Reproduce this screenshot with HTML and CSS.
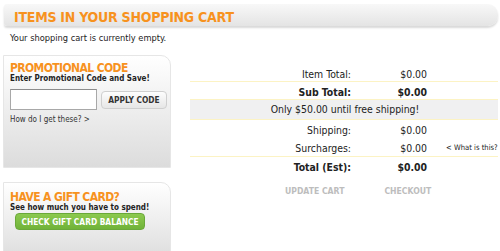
FILE: index.html
```html
<!DOCTYPE html>
<html lang="en">

<head>
    <meta charset="UTF-8">
    <meta name="viewport" content="width=device-width, initial-scale=1.0">
    <title>Shopping Cart</title>
    <link rel="stylesheet" href="styles.css">
</head>

<body>
    <div class="cart-header">
        <h1>ITEMS IN YOUR SHOPPING CART</h1>
    </div>
    <p class="empty-msg">Your shopping cart is currently empty.</p>

    <div class="cart-main">
        <div class="side-col">
            <div class="side-box promo-box">
                <h2>PROMOTIONAL CODE</h2>
                <p class="side-sub">Enter Promotional Code and Save!</p>
                <div class="promo-form">
                    <input type="text" class="promo-input">
                    <button class="apply-btn">APPLY CODE</button>
                </div>
                <a href="#" class="help-link">How do I get these? &gt;</a>
            </div>

            <div class="side-box gift-box">
                <h2>HAVE A GIFT CARD?</h2>
                <p class="side-sub">See how much you have to spend!</p>
                <button class="gift-btn">CHECK GIFT CARD BALANCE</button>
            </div>
        </div>

        <div class="totals">
            <div class="tot-row row-item">
                <span class="tot-label">Item Total:</span>
                <span class="tot-value">$0.00</span>
            </div>
            <div class="tot-row row-sub bold">
                <span class="tot-label">Sub Total:</span>
                <span class="tot-value">$0.00</span>
            </div>
            <div class="free-ship">Only $50.00 until free shipping!</div>
            <div class="tot-row row-ship">
                <span class="tot-label">Shipping:</span>
                <span class="tot-value">$0.00</span>
            </div>
            <div class="tot-row row-sur">
                <span class="tot-label">Surcharges:</span>
                <span class="tot-value">$0.00</span>
                <a href="#" class="what-link">&lt; What is this?</a>
            </div>
            <div class="tot-row row-total bold">
                <span class="tot-label">Total (Est):</span>
                <span class="tot-value">$0.00</span>
            </div>
            <div class="cart-actions">
                <button class="action-btn">UPDATE CART</button>
                <button class="action-btn">CHECKOUT</button>
            </div>
        </div>
    </div>
</body>

</html>
```
FILE: styles.css
```css
body {
    font-family: "DejaVu Sans Condensed", "DejaVu Sans", sans-serif;
    margin: 0;
    padding: 0;
    color: #222;
    background-color: #fff;
}

.cart-header {
    margin: 4px 2px 0 4px;
    height: 22px;
    border-radius: 3px 10px 10px 3px;
    background: linear-gradient(#f8f8f8, #e4e4e4);
    box-shadow: 0 2px 2px rgba(0, 0, 0, 0.15);
}

.cart-header h1 {
    margin: 0;
    padding-left: 10px;
    font-size: 14px;
    line-height: 26px;
    height: 22px;
    letter-spacing: -0.25px;
    color: #f7921e;
}

h2 {
    margin: 0;
    font-size: 12px;
    line-height: 11px;
    letter-spacing: -0.6px;
    color: #f7921e;
}

.empty-msg {
    margin: 6px 0 0 10px;
    font-size: 9.2px;
    line-height: 12px;
}

.cart-main {
    display: flex;
    margin-top: 11px;
}

.side-col {
    width: 168px;
    margin-left: 3px;
}

.side-box {
    box-sizing: border-box;
    border: 1px solid #e6e6e6;
    border-radius: 0 10px 0 0;
    background: linear-gradient(#fff, #dcdcdc);
    padding: 7px 0 0 6px;
}

.promo-box {
    height: 113px;
}

.gift-box {
    height: 80px;
    margin-top: 14px;
    padding-top: 9px;
}

.side-sub {
    margin: 0;
    font-size: 8px;
    line-height: 10px;
    font-weight: bold;
}

.promo-form {
    display: flex;
    align-items: center;
    margin-top: 5px;
}

.promo-input {
    box-sizing: border-box;
    width: 87px;
    height: 21px;
    margin: 0;
    border: 1px solid #a8a8a8;
    border-top-color: #8c8c8c;
    background: #fff;
}

.apply-btn {
    width: 66px;
    height: 18px;
    margin-left: 4px;
    padding: 0;
    font-family: inherit;
    font-size: 8.3px;
    font-weight: bold;
    color: #333;
    border: 1px solid #cfcfcf;
    border-radius: 4px;
    background: linear-gradient(#fdfdfd, #e6e6e6);
}

.help-link {
    display: block;
    margin-top: 5px;
    font-size: 8px;
    line-height: 10px;
    color: #333;
    text-decoration: none;
}

.gift-btn {
    display: block;
    width: 130px;
    height: 17px;
    margin: 0 0 0 5px;
    padding: 0;
    font-family: inherit;
    font-size: 8.3px;
    font-weight: bold;
    color: #fff;
    border: 1px solid #6aa83a;
    border-radius: 4px;
    background: linear-gradient(#8cc94f, #70b339);
}

.totals {
    width: 308px;
    margin-left: 19px;
    font-size: 10.4px;
}

.tot-row {
    display: flex;
}

.tot-label {
    width: 161px;
    text-align: right;
}

.tot-value {
    width: 76px;
    text-align: right;
}

.bold {
    font-weight: bold;
}

.row-item {
    margin-top: 12px;
    line-height: 14px;
    border-bottom: 1px solid #fcf3c4;
}

.row-sub {
    padding-top: 3px;
    line-height: 14px;
}

.free-ship {
    line-height: 19px;
    text-align: center;
    padding-left: 2px;
    background-color: #f0f0f1;
    border-top: 1px solid #fcf3c4;
    border-bottom: 1px solid #fcf3c4;
}

.row-ship {
    padding-top: 2px;
    line-height: 17px;
}

.row-sur {
    padding-top: 1px;
    line-height: 16px;
    border-bottom: 1px solid #fcf3c4;
}

.what-link {
    margin-left: 19px;
    font-size: 7.6px;
    color: #222;
    text-decoration: none;
}

.row-total {
    line-height: 20px;
}

.cart-actions {
    display: flex;
    margin-top: 5px;
    padding-left: 95px;
}

.action-btn {
    padding: 0;
    margin-right: 40px;
    font-family: inherit;
    font-size: 8.6px;
    font-weight: bold;
    line-height: 18px;
    color: #bdbdbd;
    border: none;
    background: none;
}
```
